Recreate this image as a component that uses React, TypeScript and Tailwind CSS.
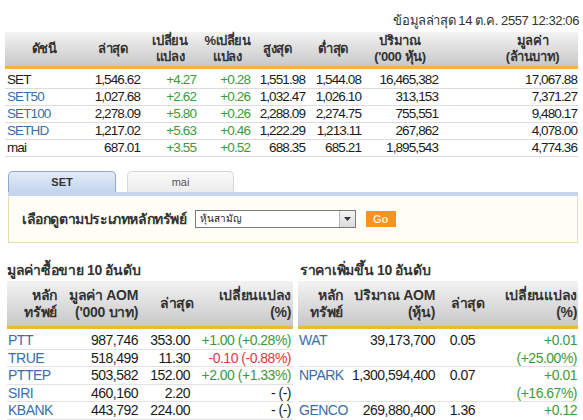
import React from "react";

const font = {
  fontFamily: '"Liberation Sans", "Noto Sans", sans-serif',
};

type IndexRow = {
  name: string;
  link: boolean;
  last: string;
  chg: string;
  pct: string;
  high: string;
  low: string;
  vol: string;
  val: string;
};

const indexRows: IndexRow[] = [
  { name: "SET", link: false, last: "1,546.62", chg: "+4.27", pct: "+0.28", high: "1,551.98", low: "1,544.08", vol: "16,465,382", val: "17,067.88" },
  { name: "SET50", link: true, last: "1,027.68", chg: "+2.62", pct: "+0.26", high: "1,032.47", low: "1,026.10", vol: "313,153", val: "7,371.27" },
  { name: "SET100", link: true, last: "2,278.09", chg: "+5.80", pct: "+0.26", high: "2,288.09", low: "2,274.75", vol: "755,551", val: "9,480.17" },
  { name: "SETHD", link: true, last: "1,217.02", chg: "+5.63", pct: "+0.46", high: "1,222.29", low: "1,213.11", vol: "267,862", val: "4,078.00" },
  { name: "mai", link: false, last: "687.01", chg: "+3.55", pct: "+0.52", high: "688.35", low: "685.21", vol: "1,895,543", val: "4,774.36" },
];

const topValue = [
  { sym: "PTT", val: "987,746", last: "353.00", chg: "+1.00 (+0.28%)", tone: "up" },
  { sym: "TRUE", val: "518,499", last: "11.30", chg: "-0.10 (-0.88%)", tone: "down" },
  { sym: "PTTEP", val: "503,582", last: "152.00", chg: "+2.00 (+1.33%)", tone: "up" },
  { sym: "SIRI", val: "460,160", last: "2.20", chg: "- (-)", tone: "flat" },
  { sym: "KBANK", val: "443,792", last: "224.00", chg: "- (-)", tone: "flat" },
];

const topGainers = [
  { sym: "WAT", vol: "39,173,700", last: "0.05", chg: "+0.01", pct: "(+25.00%)" },
  { sym: "NPARK", vol: "1,300,594,400", last: "0.07", chg: "+0.01", pct: "(+16.67%)" },
  { sym: "GENCO", vol: "269,880,400", last: "1.36", chg: "+0.12", pct: "(+8.82%)" },
];

const toneClass: Record<string, string> = {
  up: "text-[#3c9a3c]",
  down: "text-[#e0383a]",
  flat: "text-[#1a1a1a]",
};

function HeadBar({ className, children }: { className?: string; children: React.ReactNode }) {
  return (
    <div className={"flex border-b-[3px] border-[#f2b53c] bg-gradient-to-b from-[#f3f3f3] to-[#c8c8c8] font-bold text-[#333] " + (className ?? "")}>
      {children}
    </div>
  );
}

export default function App() {
  return (
    <div className="h-[420px] w-[583px] overflow-hidden bg-white text-[#1a1a1a]" style={font}>
      <div className="flex h-[32px] items-end justify-end pb-[5px] pr-[4px] text-[13px] leading-none tracking-[-0.4px] text-[#333]">
        ข้อมูลล่าสุด 14 ต.ค. 2557 12:32:06
      </div>

      <div className="ml-[5px] w-[573px]">
        <HeadBar className="h-[37px] items-center text-[13px] leading-[16px] tracking-[-0.4px]">
          <div className="w-[78px] text-center">ดัชนี</div>
          <div className="w-[60px] text-center">ล่าสุด</div>
          <div className="w-[54px] text-center">เปลี่ยน<br />แปลง</div>
          <div className="w-[55px] pl-[6px] text-center">%เปลี่ยน<br />แปลง</div>
          <div className="w-[55px] pr-[4px] text-center">สูงสุด</div>
          <div className="w-[56px] pr-[4px] text-center">ต่ำสุด</div>
          <div className="w-[78px] pr-[4px] text-center">ปริมาณ<br />('000 หุ้น)</div>
          <div className="w-[137px] pl-[46px] text-center">มูลค่า<br />(ล้านบาท)</div>
        </HeadBar>
        <div className="pt-[3px] text-[13.5px] tracking-[-0.9px]">
          {indexRows.map((r) => (
            <div key={r.name} className="flex h-[17px] items-center border-b border-[#dcdcdc] leading-none">
              <div className={"w-[78px] pl-[2px] " + (r.link ? "text-[#3a6ea8]" : "text-[#1a1a1a]")}>{r.name}</div>
              <div className="w-[60px] pr-[3px] text-right">{r.last}</div>
              <div className="w-[54px] pr-[1px] text-right text-[#3c9a3c]">{r.chg}</div>
              <div className="w-[55px] pr-[2px] text-right text-[#3c9a3c]">{r.pct}</div>
              <div className="w-[55px] pr-[2px] text-right">{r.high}</div>
              <div className="w-[56px] pr-[2px] text-right">{r.low}</div>
              <div className="w-[78px] pr-[3px] text-right">{r.vol}</div>
              <div className="w-[137px] pr-[1px] text-right">{r.val}</div>
            </div>
          ))}
        </div>
      </div>

      <div className="ml-[8px] mt-[14px] w-[570px]">
        <div className="flex h-[21px] items-end gap-[11px]">
          <div className="flex h-[21px] w-[108px] items-center justify-center rounded-t-[5px] border border-b-0 border-[#8ea9cc] bg-gradient-to-b from-[#e3ecf8] to-[#c4d6ee] text-[11px] font-bold text-[#333]">
            SET
          </div>
          <div className="flex h-[21px] w-[107px] items-center justify-center rounded-t-[5px] border border-b-0 border-[#d8d8d8] bg-gradient-to-b from-[#fafafa] to-[#ececec] text-[11px] text-[#555]">
            mai
          </div>
        </div>
        <div className="h-[4px] bg-[#c5d6ee]" />
        <div className="flex h-[47px] items-center border border-t-0 border-[#eadca6] bg-[#fffef6] pl-[13px]">
          <span className="text-[14px] font-bold tracking-[-0.4px] text-[#333]">เลือกดูตามประเภทหลักทรัพย์</span>
          <div className="ml-[8px] flex h-[18px] w-[161px] items-center border border-[#7a7a7a] bg-white">
            <span className="flex-1 pl-[4px] text-[10px] leading-none text-[#222]">หุ้นสามัญ</span>
            <span className="flex h-[16px] w-[16px] items-center justify-center border-l border-[#b5b5b5] bg-gradient-to-b from-[#f4f4f4] to-[#dcdcdc]">
              <svg width="7" height="4" viewBox="0 0 7 4"><path d="M0 0h7L3.5 4z" fill="#333" /></svg>
            </span>
          </div>
          <div className="ml-[10px] flex h-[16px] w-[30px] items-center justify-center bg-[#f7931e] text-[11px] font-bold text-[#ffe9c8]">
            Go
          </div>
        </div>
      </div>

      <div className="mt-[20px] flex">
        <div className="ml-[7px] w-[286px]">
          <div className="pb-[4px] text-[14px] font-bold leading-[14px] tracking-[-0.3px] text-[#333]">มูลค่าซื้อขาย 10 อันดับ</div>
          <HeadBar className="h-[48px] items-center text-[14px] leading-[17px] tracking-[-0.3px]">
            <div className="w-[50px] text-right">หลัก<br />ทรัพย์</div>
            <div className="w-[81px] text-right">มูลค่า AOM<br />('000 บาท)</div>
            <div className="w-[56px] pl-[22px] text-center">ล่าสุด</div>
            <div className="w-[97px] text-right">เปลี่ยนแปลง<br />(%)</div>
          </HeadBar>
          <div className="pt-[3px] text-[14px] tracking-[-0.5px]">
            {topValue.map((r) => (
              <div key={r.sym} className="flex h-[17.5px] items-center border-b border-[#e2e2e2] leading-none">
                <div className="w-[50px] pl-[1px] text-[#3a6ea8]">{r.sym}</div>
                <div className="w-[81px] text-right">{r.val}</div>
                <div className="w-[52px] text-right">{r.last}</div>
                <div className={"w-[101px] text-right " + toneClass[r.tone]}>{r.chg}</div>
              </div>
            ))}
          </div>
        </div>

        <div className="ml-[5px] w-[280px]">
          <div className="pb-[4px] pl-[2px] text-[14px] font-bold leading-[14px] tracking-[-0.3px] text-[#333]">ราคาเพิ่มขึ้น 10 อันดับ</div>
          <HeadBar className="h-[48px] items-center text-[14px] leading-[17px] tracking-[-0.3px]">
            <div className="w-[45px] text-right">หลัก<br />ทรัพย์</div>
            <div className="w-[92px] text-right">ปริมาณ AOM<br />(หุ้น)</div>
            <div className="w-[50px] pl-[16px] text-center">ล่าสุด</div>
            <div className="w-[92px] text-right">เปลี่ยนแปลง<br />(%)</div>
          </HeadBar>
          <div className="pt-[3px] text-[14px] tracking-[-0.5px]">
            {topGainers.map((r) => (
              <div key={r.sym} className="flex h-[35px] border-b border-[#e2e2e2] leading-[17.5px]">
                <div className="w-[45px] pl-[1px] text-[#3a6ea8]">{r.sym}</div>
                <div className="w-[92px] text-right">{r.vol}</div>
                <div className="w-[40px] text-right">{r.last}</div>
                <div className="w-[102px] text-right text-[#3c9a3c]">
                  {r.chg}
                  <br />
                  {r.pct}
                </div>
              </div>
            ))}
          </div>
        </div>
      </div>
    </div>
  );
}
